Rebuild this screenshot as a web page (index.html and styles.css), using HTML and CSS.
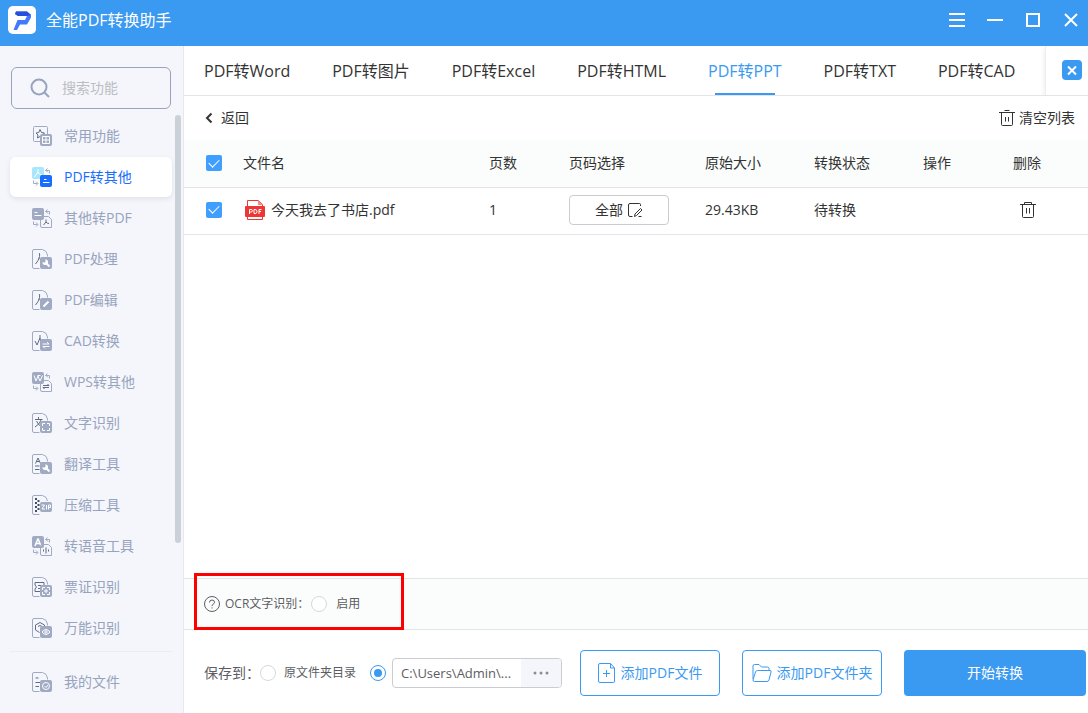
FILE: index.html
```html
<!DOCTYPE html>
<html lang="zh-CN">
<head>
<meta charset="utf-8">
<meta name="viewport" content="width=device-width, initial-scale=1">
<title>全能PDF转换助手</title>
<link rel="stylesheet" href="styles.css">
</head>
<body>
<svg class="defs" aria-hidden="true">
  <symbol id="doc" viewBox="0 0 20 20">
    <path class="line" d="M7.500 19.500H2Q.5 19.500.5 18V2Q.5.5 2 .5H10.500Q15 1.500 15.500 6V7.500"/>
    <rect class="fill" x="8" y="8" width="12" height="12" rx="2"/>
  </symbol>
  <symbol id="swap-arrows" viewBox="0 0 20 20">
    <path class="line" d="M15.500 1.500 13.500 3.500H17.500V6.500M14 3.500 16 5.500M1.500 13.500V16.500H5.500M4 14.500 6 16.500 4 18.500"/>
  </symbol>
  <symbol id="pdf-mark" viewBox="0 0 20 20">
    <path class="dark" d="M7 4Q8 4 7.500 7.500 6.500 12 3.500 15M7.500 8.500Q8 11 10 12"/>
  </symbol>
  <symbol id="wrench" viewBox="0 0 20 20">
    <path class="white bold" d="M13.500 13.500 17.500 17.500"/>
    <path fill="#fff" stroke="none" d="M13 10.500A2.800 2.800 0 1 1 10.500 13L12.200 13.800 13.800 12.200Z"/>
  </symbol>
  <symbol id="focus" viewBox="0 0 20 20">
    <path class="white" d="M10.500 13V10.500H13M15 10.500H17.500V13M17.500 15V17.500H15M13 17.500H10.500V15"/>
  </symbol>
</svg>

<div class="app">
  <header class="titlebar">
    <svg class="logo" viewBox="0 0 28 28" aria-hidden="true">
      <rect width="28" height="28" rx="5" fill="#fff"/>
      <path d="M8 5.500H19L23 9V11.500L19 18.500H12L9 24H5.500L9.500 14H17L19 10H10L7 8Z" fill="#3f7bfa"/>
      <path d="M8 5.500H19L23 9 19 10H10L7 8Z" fill="#2450dd"/>
    </svg>
    <h1 class="app-name">全能PDF转换助手</h1>
    <div class="window-buttons">
      <button type="button" aria-label="菜单"><svg viewBox="0 0 16 16"><path d="M0 2H16M0 8H16M0 14H16"/></svg></button>
      <button type="button" aria-label="最小化"><svg viewBox="0 0 16 16"><path d="M0 8H16"/></svg></button>
      <button type="button" aria-label="最大化"><svg viewBox="0 0 16 16"><path d="M2 2H14V14H2Z"/></svg></button>
      <button type="button" aria-label="关闭"><svg viewBox="0 0 16 16"><path d="M2 2 14 14M14 2 2 14"/></svg></button>
    </div>
  </header>

  <div class="body">
    <aside class="sidebar">
      <label class="search">
        <svg viewBox="0 0 20 20" aria-hidden="true"><circle cx="9" cy="9" r="7.500"/><path d="M14.500 14.500 19 19"/></svg>
        <input type="search" placeholder="搜索功能" aria-label="搜索功能">
      </label>
      <div class="nav-area">
        <nav class="nav">
          <a href="#"><svg class="icon" viewBox="0 0 20 20"><rect class="line" x="1.500" y=".5" width="14" height="15" rx="1"/><path class="dark" d="M8 3.500 9.500 6.500 12.500 7 10.500 9 11 12 8 10.500 5.500 12 6 9 4 7 6.800 6.500Z"/><rect class="fill" x="8" y="8" width="12" height="12" rx="2"/><path class="white" d="M10.500 10.500H17.500V17.500H10.500ZM14 10.500V17.500M10.500 14H17.500"/></svg><span>常用功能</span></a>
          <a href="#" class="active" aria-current="page"><svg class="icon" viewBox="0 0 20 20"><rect x="0" y="0" width="12" height="12" rx="2" fill="#a9e5fb" stroke="none"/><path class="white" d="M6 2V5L2.500 10M6 5Q7 8 10 8"/><use href="#swap-arrows"/><rect x="8" y="8" width="12" height="12" rx="2" fill="#176dfd" stroke="none"/><path class="white" d="M12 12.500H14.500M11 15.500H17.500"/></svg><span>PDF转其他</span></a>
          <a href="#"><svg class="icon" viewBox="0 0 20 20"><rect class="fill" width="12" height="12" rx="2"/><path class="white" d="M2.500 4.500H5.500M2.500 7.500H9.500"/><use href="#swap-arrows"/><path class="line" d="M8.500 17V10Q8.500 8.500 10 8.500H16.500L19.500 11.500V19.500H10Q8.500 19.500 8.500 18Z"/><path class="dark" d="M14 11.500V14L11.500 17M14 14Q15 15.500 17 15.500"/></svg><span>其他转PDF</span></a>
          <a href="#"><svg class="icon" viewBox="0 0 20 20"><use href="#pdf-mark"/><use href="#doc"/><use href="#wrench"/></svg><span>PDF处理</span></a>
          <a href="#"><svg class="icon" viewBox="0 0 20 20"><use href="#pdf-mark"/><use href="#doc"/><path class="white bold" d="M11.500 16.500 16.500 11.500"/></svg><span>PDF编辑</span></a>
          <a href="#"><svg class="icon" viewBox="0 0 20 20"><path class="dark" d="M8 4V9M8 7 5 14 3 10M8 8 10 13"/><use href="#doc"/><path class="white" d="M10.500 13H17L15 11M17.500 15.500H11L13 17.500"/></svg><span>CAD转换</span></a>
          <a href="#"><svg class="icon" viewBox="0 0 20 20"><rect class="fill" width="12" height="12" rx="2"/><path class="white" d="M2 3.500 4 9 6 4 8 9 10.500 3.500M5.500 3.500H8.500"/><use href="#swap-arrows"/><path class="line" d="M8.500 17V10Q8.500 8.500 10 8.500H16.500L19.500 11.500V19.500H10Q8.500 19.500 8.500 18Z"/><path class="dark" d="M11 13.500H17L15.500 12M17 15.500H11L12.500 17"/></svg><span>WPS转其他</span></a>
          <a href="#"><svg class="icon" viewBox="0 0 20 20"><path class="dark" d="M6.500 4V6M3 6.500H10.500M4.500 8Q6 12 10 14M9 7Q8 11 3 14"/><use href="#doc"/><use href="#focus"/></svg><span>文字识别</span></a>
          <a href="#"><svg class="icon" viewBox="0 0 20 20"><path class="dark" d="M3.500 9.500 6 4 8.500 9.500M4.500 7.500H7.500M3 12H7.500M3 15.500H7.500"/><use href="#doc"/><use href="#wrench"/></svg><span>翻译工具</span></a>
          <a href="#"><svg class="icon" viewBox="0 0 20 20"><path class="line" d="M7.500 19.500H2Q.5 19.500.5 18V2Q.5.5 2 .5H10.500Q15 1.500 15.500 6"/><path class="zipper" d="M4 3V17M6.500 5V17"/><rect class="fill" x="8" y="7" width="12" height="10" rx="2"/><path class="white" d="M9.500 10H12.500L10 14H13M14.500 10V14.500M16.500 14.500V10H18.500V12.500H16.500"/></svg><span>压缩工具</span></a>
          <a href="#"><svg class="icon" viewBox="0 0 20 20"><rect class="fill" width="12" height="12" rx="2"/><path class="white" stroke-width="1.500" stroke-linejoin="bevel" d="M3 10 6 2.500 9 10M4 7.500H8"/><use href="#swap-arrows"/><path class="line" d="M8.500 17V10Q8.500 8.500 10 8.500H16.500L19.500 11.500V19.500H10Q8.500 19.500 8.500 18Z"/><path class="dark" d="M11.500 13.500V15.500M14 11.500V17.500M16.500 13.500V15.500"/></svg><span>转语音工具</span></a>
          <a href="#"><svg class="icon" viewBox="0 0 20 20"><path class="dark" d="M3 5.500H12V8M3 5.500V8L4.500 10 3 12V14.500H8M6 8.500H9M6 11.500H8"/><use href="#doc"/><use href="#focus"/><path class="white" d="M14 12V16M12 14H16"/></svg><span>票证识别</span></a>
          <a href="#"><svg class="icon" viewBox="0 0 20 20"><path class="dark" d="M8 4.500 12.500 7V9M8 4.500 3.500 7V12L7.500 14.500M6 8.500 8 7.500 10 8.500"/><use href="#doc"/><path class="white" d="M10 14Q14 9 18 14 14 19 10 14Z"/><circle class="white" cx="14" cy="14" r="1.200"/></svg><span>万能识别</span></a>
        </nav>
        <div class="nav-footer">
          <a href="#"><svg class="icon" viewBox="0 0 20 20"><path class="dark" d="M3.500 6H6.500M3.500 10.500H9M3.500 14.500H7"/><use href="#doc"/><circle class="white" cx="14" cy="14" r="3.500"/><path class="white" d="M12.500 14 14 15.500 16 13"/></svg><span>我的文件</span></a>
        </div>
        <div class="scroll-thumb"></div>
      </div>
    </aside>

    <main class="main">
      <div class="tabbar">
        <nav class="tabs">
          <a href="#">PDF转Word</a>
          <a href="#">PDF转图片</a>
          <a href="#">PDF转Excel</a>
          <a href="#">PDF转HTML</a>
          <a href="#" class="selected" aria-current="page">PDF转PPT</a>
          <a href="#">PDF转TXT</a>
          <a href="#">PDF转CAD</a>
        </nav>
        <div class="tab-close">
          <button type="button" aria-label="关闭标签"><svg viewBox="0 0 20 20"><path d="M6 6.500 14 14.500M14 6.500 6 14.500"/></svg></button>
        </div>
      </div>

      <div class="toolbar">
        <button type="button" class="text-button"><svg class="chevron" viewBox="0 0 10 12" aria-hidden="true"><path d="M7.500 1.500 3 6 7.500 10.500"/></svg>返回</button>
        <button type="button" class="text-button clear"><svg class="trash" viewBox="0 0 16 16" aria-hidden="true"><path d="M0 2.500H16M5.500.5H10.500M2.500 2.500V14.500Q2.500 15.500 3.500 15.500H12.500Q13.500 15.500 13.500 14.500V2.500M6.500 7V11.500M9.500 7V11.500"/></svg>清空列表</button>
      </div>

      <table class="files">
        <colgroup><col class="c-check"><col><col class="c-pages"><col class="c-range"><col class="c-size"><col class="c-state"><col class="c-op"><col class="c-del"></colgroup>
        <thead>
          <tr><th class="check-cell"><input type="checkbox" checked aria-label="全选"></th><th>文件名</th><th>页数</th><th>页码选择</th><th>原始大小</th><th>转换状态</th><th>操作</th><th>删除</th></tr>
        </thead>
        <tbody>
          <tr>
            <td class="check-cell"><input type="checkbox" checked aria-label="选择 今天我去了书店.pdf"></td>
            <td><span class="file"><svg viewBox="0 0 20 20" aria-hidden="true"><path d="M2.500 6V.5H13.500L17.500 4.500V6M2.500 15V19.500H17.500V15" fill="none" stroke="#ee3735"/><path d="M13 0 18 5H13Z" fill="#f58a88"/><rect y="6" width="20" height="11" rx="1" fill="#ee3735"/><path class="white" d="M4.500 14V9.500H6Q7.500 9.500 7.500 10.700T6 12H4.500M9 9.500V13.500H10Q12 13.500 12 11.500T10 9.500ZM14 14V9.500H16.500M14 11.500H16"/></svg>今天我去了书店.pdf</span></td>
            <td>1</td>
            <td><button type="button" class="range">全部<svg viewBox="0 0 16 16" aria-hidden="true"><path d="M13.500 4V2.500Q13.500 1.500 12.500 1.500H3Q1.500 1.500 1.500 3V13Q1.500 14.500 3 14.500H5.500M13.500 6.500 15 8 9.500 13.500 7.500 14.500 8 12ZM11.500 14.500H14.500"/></svg></button></td>
            <td>29.43KB</td>
            <td>待转换</td>
            <td></td>
            <td><button type="button" class="delete" aria-label="删除"><svg class="trash" viewBox="0 0 16 16"><path d="M0 2.500H16M4.500 2.500V.5H11.500V2.500M2.500 2.500V14.500Q2.500 15.500 3.500 15.500H12.500Q13.500 15.500 13.500 14.500V2.500M6.500 6V11.500M9.500 6V11.500"/></svg></button></td>
          </tr>
        </tbody>
      </table>

      <section class="ocr">
        <svg class="help" viewBox="0 0 16 16" aria-hidden="true"><circle cx="8" cy="8" r="7.500"/><path d="M5.500 6.500Q5.500 4 8 4T10.500 6.300Q10.500 7.500 9 8.300 8 8.900 8 10M8 11.300V12.500"/></svg>
        <span>OCR文字识别：</span>
        <label class="option"><input type="radio" name="ocr">启用</label>
        <div class="highlight"></div>
      </section>

      <footer class="actions">
        <div class="save" role="group" aria-label="保存到">
          <span class="save-title">保存到：</span>
          <label class="option"><input type="radio" name="target">原文件夹目录</label>
          <input type="radio" name="target" class="custom" checked aria-label="自定义目录">
          <div class="path">
            <input type="text" value="C:\Users\Admin\..." aria-label="保存路径">
            <button type="button" aria-label="浏览"><svg viewBox="0 0 16 4"><circle cx="2" cy="2" r="1.500"/><circle cx="8" cy="2" r="1.500"/><circle cx="14" cy="2" r="1.500"/></svg></button>
          </div>
        </div>
        <button type="button" class="outline"><svg viewBox="0 0 18 20" aria-hidden="true"><path d="M12.500.5H2Q.5.5.5 2V18Q.5 19.500 2 19.500H15.500Q16.500 19.500 16.500 18V5ZM12.500.5V5H16.500M8.500 7V14M5 10.500H12"/></svg>添加PDF文件</button>
        <button type="button" class="outline"><svg viewBox="0 0 20 20" aria-hidden="true"><path d="M1 16V3Q1 1.500 2.500 1.500H7L9.500 4H15.500Q17 4 17 5.500V7.500M1 17 3.500 9Q4 7.500 5.500 7.500H18Q19.500 7.500 19 9L17 17Q16.500 18.500 15 18.500H2.500Q1 18.500 1 17Z"/></svg>添加PDF文件夹</button>
        <button type="button" class="primary">开始转换</button>
      </footer>
    </main>
  </div>
</div>
</body>
</html>
```
FILE: styles.css
```css
* { box-sizing: border-box; }

body {
  margin: 0;
  font: 14px/20px "Open Sans", "Noto Sans CJK SC", sans-serif;
  color: #333;
  background: #fff;
}

button, input { font: inherit; color: inherit; margin: 0; }
button { padding: 0; border: 0; background: none; }
a { color: inherit; text-decoration: none; }
svg { display: block; flex: none; fill: none; stroke: currentColor; }
.defs { position: absolute; width: 0; height: 0; }

.app { display: flex; flex-direction: column; min-height: 100vh; }

.titlebar {
  display: flex;
  align-items: center;
  gap: 10px;
  height: 46px;
  padding: 0 9px 6px 8px;
  color: #fff;
  background: #3a99f1;
}
.logo { width: 28px; height: 28px; stroke: none; }
.app-name { flex: 1; margin: 0; font-size: 16px; font-weight: 400; }
.window-buttons { display: flex; gap: 22px; }
.window-buttons svg { width: 16px; height: 16px; stroke-width: 2; }

.body { display: flex; flex: 1; }

.sidebar {
  flex: none;
  width: 184px;
  padding-top: 21px;
  color: #98a3bd;
  background: #f4f6fb;
  border-right: 1px solid #e6e8f0;
}
.search {
  display: flex;
  align-items: center;
  gap: 12px;
  height: 42px;
  margin: 0 12px 6px 11px;
  padding: 0 8px 0 18px;
  border: 1px solid #98a3bd;
  border-radius: 6px;
}
.search svg { width: 20px; height: 20px; stroke-width: 2; }
.search input { width: 100%; min-width: 0; padding: 0; border: 0; outline: 0; background: none; }
.search input::placeholder { color: #bcbdc2; opacity: 1; }

.nav-area { position: relative; padding: 0 11px 0 10px; }
.scroll-thumb {
  position: absolute;
  top: 0;
  right: 2px;
  width: 6px;
  height: 428px;
  border-radius: 3px;
  background: #cbd1d9;
}
.nav, .nav-footer { display: flex; flex-direction: column; gap: 1px; }
.nav { padding-top: 1px; }
.nav-footer { margin-top: 3px; padding-top: 10px; border-top: 1px solid #eaecf3; }
.nav a, .nav-footer a {
  display: flex;
  align-items: center;
  gap: 12px;
  height: 40px;
  padding-left: 22px;
  border-radius: 6px;
}
.nav .active { color: #176dfd; background: #fff; box-shadow: 0 2px 5px #dfe1e8; }

.icon { width: 20px; height: 20px; }
.line { stroke: #a0aac3; fill: none; }
.active .line { stroke: #4b91ff; }
.dark { stroke: #616a80; fill: none; }
.fill { stroke: none; fill: #a0aac3; }
.white { stroke: #fff; fill: none; }
.bold { stroke-width: 2; }
.zipper { stroke: #454d60; stroke-width: 2; stroke-dasharray: 2 2; }

.main { display: flex; flex: 1; flex-direction: column; min-width: 0; }

.tabbar { display: flex; height: 50px; border-bottom: 1px solid #e4e4e8; }
.tabs { display: flex; flex: 1; gap: 42px; padding-left: 20px; font-size: 16px; line-height: 50px; white-space: nowrap; }
.tabs .selected {
  color: #3a99f1;
  background: linear-gradient(#3a99f1, #3a99f1) center bottom / 60px 2px no-repeat;
}
.tab-close { padding: 14px 6px 0 16px; border-left: 1px solid #eee; box-shadow: -2px 2px 3px #f4f4f4; clip-path: inset(0 0 0 -6px); }
.tab-close button { border-radius: 4px; color: #fff; background: #3a99f1; }
.tab-close svg { width: 20px; height: 20px; stroke-width: 2; }

.toolbar { display: flex; align-items: center; justify-content: space-between; height: 44px; padding: 0 13px 0 20px; }
.text-button { display: flex; align-items: center; gap: 7px; }
.clear { gap: 4px; }
.chevron { width: 10px; height: 12px; stroke-width: 2; }
.trash { width: 16px; height: 16px; }

.files { width: 100%; table-layout: fixed; border-collapse: collapse; }
.files th, .files td { height: 47px; padding: 0; border-bottom: 1px solid #e4e4e8; text-align: left; font-weight: 400; vertical-align: middle; }
.files td { padding-bottom: 2px; }
.files thead { background: #fafdfc; }
.files .check-cell { padding-left: 22px; }
.c-check { width: 59px; }
.c-pages { width: 80px; }
.c-range { width: 136px; }
.c-size, .c-state { width: 109px; }
.c-op { width: 90px; }
.c-del { width: 75px; }

input[type="checkbox"], input[type="radio"] { appearance: none; flex: none; display: grid; place-items: center; width: 16px; height: 16px; }
input[type="checkbox"] { border-radius: 2px; background: #409eff; }
input[type="checkbox"]:checked::before {
  content: "";
  width: 5px;
  height: 9px;
  margin-bottom: 3px;
  border: solid #fff;
  border-width: 0 1px 1px 0;
  transform: rotate(45deg);
}
input[type="radio"] { border: 1px solid #d5d8de; border-radius: 50%; background: #fff; }
input[type="radio"]:checked { border-color: #3a99f1; }
input[type="radio"]:checked::before { content: ""; width: 8px; height: 8px; border-radius: 50%; background: #3a99f1; }

.file { display: flex; align-items: center; gap: 6px; padding-left: 2px; }
.file svg { width: 20px; height: 20px; stroke: none; }
.range {
  display: flex;
  align-items: center;
  justify-content: center;
  gap: 4px;
  width: 100px;
  height: 30px;
  border: 1px solid #cbccd1;
  border-radius: 4px;
}
.range svg { width: 16px; height: 16px; }
.delete { display: block; padding-left: 7px; }

.ocr {
  position: relative;
  display: flex;
  align-items: center;
  height: 52px;
  margin-top: auto;
  padding-left: 20px;
  font-size: 12px;
  color: #5c5d63;
  background: #fafdfc;
  border: solid #dfe4e7;
  border-width: 1px 0;
}
.help { width: 16px; height: 16px; margin-right: 5px; }
.ocr .option { gap: 9px; margin-left: 2px; }
.highlight { position: absolute; left: 10px; top: -6px; width: 210px; height: 57px; border: 3px solid #f00; pointer-events: none; }

.option { display: flex; align-items: center; gap: 8px; font-size: 12px; white-space: nowrap; }
.actions { display: flex; align-items: center; gap: 22px; height: 83px; padding: 3px 2px 0 20px; }
.save { display: flex; flex: none; align-items: center; width: 358px; margin-right: -4px; color: #5c5d63; }
.save-title { white-space: nowrap; }
.custom { margin: 0 6px 0 14px; }
.path { display: flex; flex: 1; min-width: 0; height: 30px; overflow: hidden; border: 1px solid #cbccd1; border-radius: 4px; }
.path input { flex: 1; width: 0; padding: 0 0 0 8px; border: 0; outline: 0; font-size: 13px; background: none; }
.path button { display: grid; place-items: center; width: 40px; background: #f4f6fb; }
.path svg { width: 16px; height: 4px; stroke: none; fill: #8b8d96; }

.outline, .primary { display: flex; align-items: center; justify-content: center; height: 46px; border-radius: 4px; white-space: nowrap; }
.outline { flex: none; gap: 5px; width: 140px; border: 1px solid #3a99f1; color: #3a99f1; }
.outline svg { height: 20px; }
.primary { flex: 1; color: #fff; background: #3a99f1; }
```
